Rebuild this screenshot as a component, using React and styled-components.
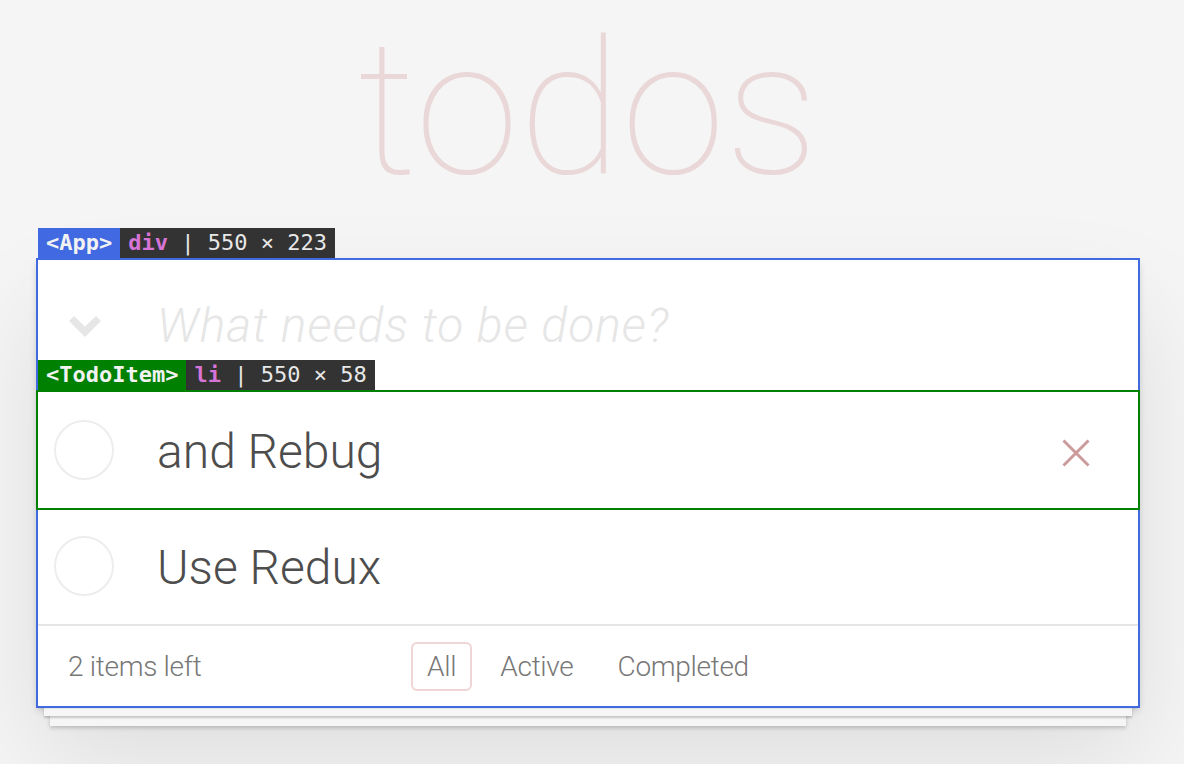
import React from 'react';
import styled, { createGlobalStyle } from 'styled-components';

const GlobalStyle = createGlobalStyle`
  html, body {
    margin: 0;
    padding: 0;
  }
  body {
    background: #f5f5f5;
    font-family: Roboto, "Helvetica Neue", "Liberation Sans", sans-serif;
    font-weight: 300;
    color: #4d4d4d;
    -webkit-font-smoothing: antialiased;
  }
`;

const Page = styled.div`
  padding-right: 8px;
  min-height: 764px;
`;

const Title = styled.h1`
  margin: 0;
  height: 260px;
  text-align: center;
  font-size: 188px;
  font-weight: 100;
  line-height: 1.17;
  color: rgba(175, 47, 47, 0.15);
`;

const TodoApp = styled.section`
  position: relative;
  width: 1100px;
  margin: 0 auto;
  background: #fff;
  box-shadow: 0 4px 8px 0 rgba(0, 0, 0, 0.2), 0 50px 100px 0 rgba(0, 0, 0, 0.1);
  outline: 2px solid #4169e1;
`;

// devtools highlight label sitting on top of the inspected element
const Inspector = styled.div`
  position: absolute;
  left: 0;
  top: -32px;
  z-index: 2;
  display: flex;
  height: 30px;
  font-family: "DejaVu Sans Mono", monospace;
  font-size: 22px;
  font-weight: 400;
  line-height: 30px;
  white-space: pre;
`;

const Tag = styled.span`
  background: ${p => p.$color};
  color: #f2f2f2;
  font-weight: 700;
  padding: 0 8px;
`;

const Meta = styled.span`
  background: #333;
  color: #e8e8e8;
  padding: 0 8px;
`;

const ElementName = styled.b`
  font-weight: 700;
  color: #d774d7;
`;

const Header = styled.header`
  display: flex;
  align-items: center;
  height: 132px;
`;

const ToggleAll = styled.label`
  flex: none;
  width: 119px;
  box-sizing: border-box;
  padding-left: 31px;
  display: flex;
  align-items: center;
`;

const NewTodo = styled.input`
  flex: 1;
  min-width: 0;
  border: 0;
  outline: none;
  background: transparent;
  padding: 0;
  font-family: inherit;
  font-size: 48px;
  font-weight: 300;
  line-height: 66px;
  color: #4d4d4d;

  &::placeholder {
    font-style: italic;
    font-weight: 300;
    letter-spacing: 1px;
    color: #e6e6e6;
  }
`;

const List = styled.ul`
  list-style: none;
  margin: 0;
  padding: 0;
`;

const Item = styled.li`
  position: relative;
  display: flex;
  align-items: center;
  height: 116px;
  outline: ${p => (p.$inspected ? '2px solid #008000' : 'none')};
`;

const CheckCell = styled.div`
  flex: none;
  width: 119px;
  box-sizing: border-box;
  padding-left: 16px;
`;

const Circle = styled.span`
  display: block;
  width: 60px;
  height: 60px;
  box-sizing: border-box;
  border: 2px solid #ededed;
  border-radius: 50%;
`;

const ItemLabel = styled.label`
  flex: 1;
  padding-top: 4px;
  font-size: 48px;
  font-weight: 300;
  line-height: 66px;
  color: #4d4d4d;
`;

const Destroy = styled.button`
  flex: none;
  width: 60px;
  height: 60px;
  margin: 6px 32px 0 0;
  padding: 0;
  border: 0;
  background: none;
  display: flex;
  align-items: center;
  justify-content: center;
  visibility: ${p => (p.$visible ? 'visible' : 'hidden')};
`;

const Footer = styled.footer`
  display: grid;
  grid-template-columns: 1fr auto 1fr;
  align-items: center;
  height: 82px;
  box-sizing: border-box;
  padding: 0 30px;
  border-top: 2px solid #e6e6e6;
  color: #777;
  font-size: 28px;
  box-shadow: 0 2px 2px rgba(0, 0, 0, 0.2),
    0 16px 0 -6px #f6f6f6,
    0 18px 2px -6px rgba(0, 0, 0, 0.2),
    0 32px 0 -12px #f6f6f6,
    0 34px 4px -12px rgba(0, 0, 0, 0.2);
`;

const Count = styled.span`
  line-height: 33px;
  letter-spacing: -0.3px;
`;

const Filters = styled.ul`
  display: flex;
  list-style: none;
  margin: 0;
  padding: 0;
`;

const FilterLink = styled.a`
  display: block;
  margin: 0 6px;
  padding: 6px 14px;
  border: 2px solid ${p => (p.$selected ? 'rgba(175, 47, 47, 0.2)' : 'transparent')};
  border-radius: 6px;
  color: inherit;
  text-decoration: none;
  line-height: 33px;
  letter-spacing: -0.3px;
`;

const Chevron = () => (
  <svg width="32" height="21" viewBox="0 0 32 21">
    <polygon points="0,5 5,0 16,10.5 27,0 32,5 16,21" fill="#e6e6e6" />
  </svg>
);

const Cross = () => (
  <svg width="28" height="28" viewBox="0 0 28 28">
    <path d="M1.5 1.5 L26.5 26.5 M26.5 1.5 L1.5 26.5" stroke="#cc9a9a" strokeWidth="3" fill="none" />
  </svg>
);

const todos = [
  { id: 1, text: 'and Rebug', hover: true },
  { id: 2, text: 'Use Redux', hover: false },
];

const filters = ['All', 'Active', 'Completed'];

const App = () => {
  return (
    <Page>
      <GlobalStyle />
      <Title>todos</Title>
      <TodoApp>
        <Inspector>
          <Tag $color="#4169e1">{'<App>'}</Tag>
          <Meta><ElementName>div</ElementName> | 550 × 223</Meta>
        </Inspector>
        <Header>
          <ToggleAll><Chevron /></ToggleAll>
          <NewTodo placeholder="What needs to be done?" />
        </Header>
        <List>
          {todos.map(todo => (
            <Item key={todo.id} $inspected={todo.hover}>
              {todo.hover && (
                <Inspector>
                  <Tag $color="#008000">{'<TodoItem>'}</Tag>
                  <Meta><ElementName>li</ElementName> | 550 × 58</Meta>
                </Inspector>
              )}
              <CheckCell><Circle /></CheckCell>
              <ItemLabel>{todo.text}</ItemLabel>
              <Destroy $visible={todo.hover}><Cross /></Destroy>
            </Item>
          ))}
        </List>
        <Footer>
          <Count>2 items left</Count>
          <Filters>
            {filters.map(f => (
              <li key={f}>
                <FilterLink href="#" $selected={f === 'All'}>{f}</FilterLink>
              </li>
            ))}
          </Filters>
          <span />
        </Footer>
      </TodoApp>
    </Page>
  );
};

export default App;
